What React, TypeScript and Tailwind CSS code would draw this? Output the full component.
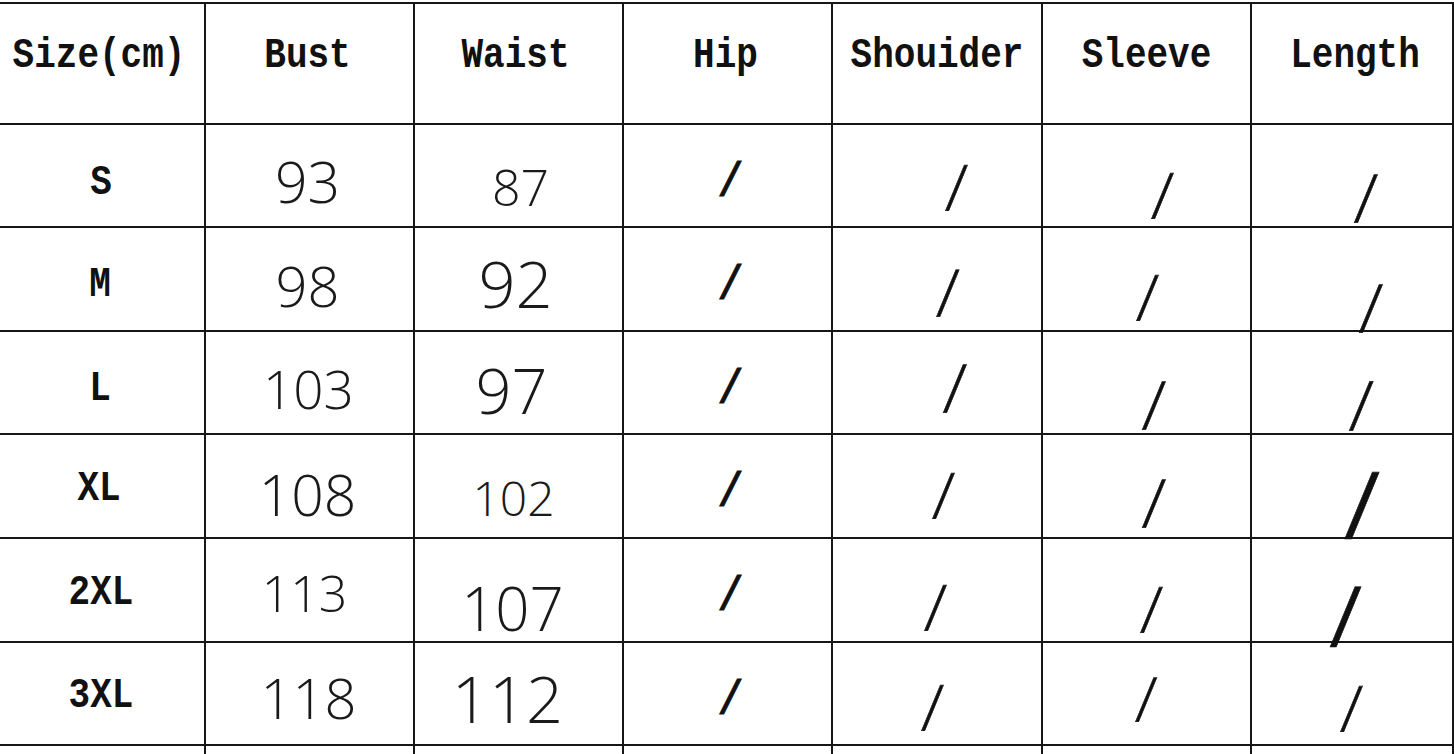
import React from "react"

const mono = "font-['Liberation_Mono','DejaVu_Sans_Mono',monospace]"
const serif = "font-['Liberation_Serif','Times_New_Roman',serif]"
const sans = "font-['Open_Sans','Noto_Sans',sans-serif]"

const headers = [
  { label: "Size(cm)", cls: "translate-x-[-3px]" },
  { label: "Bust", cls: "translate-x-[-2px]" },
  { label: "Waist", cls: "translate-x-[-3px]" },
  { label: "Hip", cls: "translate-x-[-2px]" },
  { label: "Shouider", cls: "translate-x-[0px]" },
  { label: "Sleeve", cls: "translate-x-[0px]" },
  { label: "Length", cls: "translate-x-[3px]" },
]

const rows = [
  {
    size: "S",
    sizeCls: "translate-x-[-1px] translate-y-[7px]",
    bust: { v: "93", cls: "text-[57px] translate-x-[-2px] translate-y-[6px]" },
    waist: { v: "87", cls: "text-[50px] translate-x-[2px] translate-y-[11px]" },
    shoulder: "text-[68px] translate-x-[19px] translate-y-[11px]",
    sleeve: "text-[68px] translate-x-[16px] translate-y-[19px]",
    length: "text-[72px] translate-x-[14px] translate-y-[22px]",
  },
  {
    size: "M",
    sizeCls: "translate-x-[-2px] translate-y-[6px]",
    bust: { v: "98", cls: "text-[56px] translate-x-[-2px] translate-y-[6px]" },
    waist: { v: "92", cls: "text-[65px] translate-x-[-3px] translate-y-[4px]" },
    shoulder: "text-[70px] translate-x-[11px] translate-y-[14px]",
    sleeve: "text-[68px] translate-x-[1px] translate-y-[18px]",
    length: "text-[72px] translate-x-[19px] translate-y-[29px]",
  },
  {
    size: "L",
    sizeCls: "translate-x-[-2px] translate-y-[6px]",
    bust: { v: "103", cls: "text-[53px] translate-x-[-1px] translate-y-[6px]" },
    waist: { v: "97", cls: "text-[63px] translate-x-[-7px] translate-y-[7px]" },
    shoulder: "text-[72px] translate-x-[18px] translate-y-[5px]",
    sleeve: "text-[72px] translate-x-[8px] translate-y-[22px]",
    length: "text-[74px] translate-x-[9px] translate-y-[22px]",
  },
  {
    size: "XL",
    sizeCls: "translate-x-[-3px] translate-y-[3px]",
    bust: { v: "108", cls: "text-[57px] translate-x-[-2px] translate-y-[8px]" },
    waist: { v: "102", cls: "text-[48px] translate-x-[-5px] translate-y-[12px]" },
    shoulder: "text-[68px] translate-x-[6px] translate-y-[9px]",
    sleeve: "text-[72px] translate-x-[8px] translate-y-[17px]",
    length: "text-[100px] font-bold translate-x-[10px] translate-y-[19px]",
  },
  {
    size: "2XL",
    sizeCls: "translate-x-[-1px] translate-y-[3px]",
    bust: { v: "113", cls: "text-[50px] translate-x-[-5px] translate-y-[3px]" },
    waist: { v: "107", cls: "text-[60px] translate-x-[-6px] translate-y-[18px]" },
    shoulder: "text-[68px] translate-x-[-2px] translate-y-[17px]",
    sleeve: "text-[68px] translate-x-[5px] translate-y-[19px]",
    length: "text-[90px] font-bold translate-x-[-6px] translate-y-[26px]",
  },
  {
    size: "3XL",
    sizeCls: "translate-x-[-1px] translate-y-[2px]",
    bust: { v: "118", cls: "text-[56px] translate-x-[-1px] translate-y-[3px]" },
    waist: { v: "112", cls: "text-[65px] translate-x-[-11px] translate-y-[5px]" },
    shoulder: "text-[68px] translate-x-[-5px] translate-y-[13px]",
    sleeve: "text-[66px] translate-x-[0px] translate-y-[5px]",
    length: "text-[68px] translate-x-[-1px] translate-y-[14px]",
  },
]

function Cell({ children }: { children?: React.ReactNode }) {
  return <div className="bg-white flex items-center justify-center">{children}</div>
}

function Slash({ cls }: { cls: string }) {
  return (
    <span className={`${serif} leading-none text-[#111] [-webkit-text-stroke:0.6px_#111] -skew-x-[4deg] ${cls}`}>
      /
    </span>
  )
}

export default function App() {
  return (
    <div className="w-[1454px] h-[754px] bg-white overflow-hidden">
      <div className="mt-[2px] grid grid-cols-[204px_207px_207px_207px_208px_207px_200px] grid-rows-[119px_101px_102px_101px_102px_102px_101px_60px] gap-[2px] bg-[#161616] pt-[2px] pr-[2px]">
        {headers.map((h) => (
          <Cell key={h.label}>
            <span className={`${mono} font-bold text-[36px] leading-none text-[#111] scale-y-[1.18] translate-y-[-8px] ${h.cls}`}>
              {h.label}
            </span>
          </Cell>
        ))}

        {rows.map((r) => (
          <React.Fragment key={r.size}>
            <Cell>
              <span className={`${mono} font-bold text-[36px] leading-none text-[#111] scale-y-[1.18] ${r.sizeCls}`}>
                {r.size}
              </span>
            </Cell>
            <Cell>
              <span className={`${sans} font-light leading-none text-[#1a1a1a] ${r.bust.cls}`}>{r.bust.v}</span>
            </Cell>
            <Cell>
              <span className={`${sans} font-light leading-none text-[#1a1a1a] ${r.waist.cls}`}>{r.waist.v}</span>
            </Cell>
            <Cell>
              <span className={`${mono} font-normal leading-none text-[#111] [-webkit-text-stroke:1px_#111] text-[44px] scale-y-[1.1] translate-x-[3px] translate-y-[7px]`}>
                /
              </span>
            </Cell>
            <Cell>
              <Slash cls={r.shoulder} />
            </Cell>
            <Cell>
              <Slash cls={r.sleeve} />
            </Cell>
            <Cell>
              <Slash cls={r.length} />
            </Cell>
          </React.Fragment>
        ))}

        {headers.map((h) => (
          <Cell key={"tail-" + h.label} />
        ))}
      </div>
    </div>
  )
}
